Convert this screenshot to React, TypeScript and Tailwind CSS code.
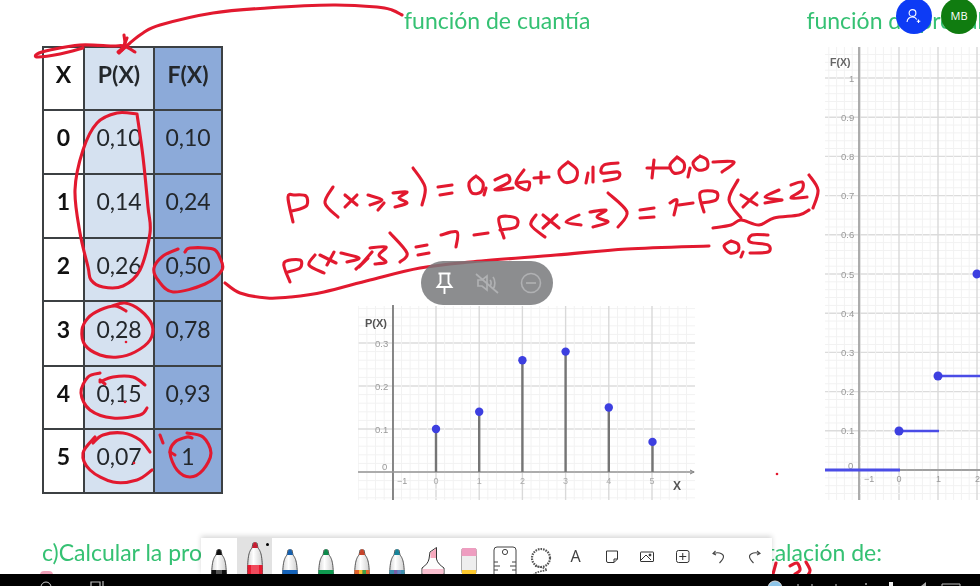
import React from "react";

type Pt = [number, number];

function smooth(p: Pt[]): string {
  if (p.length < 3) return "M" + p.map((q) => q.join(" ")).join("L");
  let d = `M${p[0][0]} ${p[0][1]}`;
  for (let i = 0; i < p.length - 1; i++) {
    const a = p[i - 1] || p[i];
    const b = p[i];
    const c = p[i + 1];
    const e = p[i + 2] || c;
    const c1x = b[0] + (c[0] - a[0]) / 6;
    const c1y = b[1] + (c[1] - a[1]) / 6;
    const c2x = c[0] - (e[0] - b[0]) / 6;
    const c2y = c[1] - (e[1] - b[1]) / 6;
    d += `C${c1x} ${c1y} ${c2x} ${c2y} ${c[0]} ${c[1]}`;
  }
  return d;
}

const strokes: Pt[][] = [
  // arrow
  [[402,15],[392,10],[377,7],[333,5],[267,8],[213,13],[160,25],[143,33],[130,43],[119,53]],
  [[124,35],[125,45],[122,50]],
  [[127,38],[123,47],[118,52]],
  [[135,52],[124,46],[112,46],[80,45],[50,50],[37,54],[38,57],[60,54],[83,48]],
  // big oval
  [[137,114],[117,113],[97,123],[83,150],[75,190],[80,233],[88,267],[91,280],[103,287],[123,286],[140,270],[150,233],[148,207],[143,157],[137,114]],
  // 0,50
  [[185,252],[190,248],[213,249],[220,258],[222,270],[205,284],[173,292],[158,280],[154,268],[163,256],[178,249]],
  // 0,28
  [[112,306],[125,303],[140,310],[152,325],[150,340],[135,352],[118,357],[100,355],[85,345],[82,330],[88,318],[100,310],[115,306],[126,311]],
  // 0,15
  [[100,373],[88,377],[81,393],[90,410],[113,418],[140,415],[147,408]],
  [[100,382],[113,377],[133,377],[145,385]],
  [[100,380],[105,384]],
  // 0,07
  [[93,443],[103,435],[123,433],[140,440],[150,452]],
  [[95,437],[83,453],[90,470],[113,482],[137,480],[152,470]],
  // 1
  [[187,433],[203,437],[211,453],[203,470],[190,477],[177,470],[170,453],[175,442],[187,437],[192,438]],
  [[170,452],[175,455]],
  [[160,435],[163,443]],
  // first line
  [[293,222],[288,197],[295,195],[306,196],[307,205],[300,209],[291,211]],
  [[333,187],[325,203],[338,217]],
  [[345,195],[357,205]],
  [[357,195],[345,207]],
  [[368,195],[382,200],[370,205]],
  [[384,203],[378,210]],
  [[393,193],[407,192],[399,198],[407,203],[395,207]],
  [[413,168],[425,187],[422,205]],
  [[438,187],[452,185]],
  [[440,195],[452,193]],
  [[476,176],[469,183],[472,193],[481,192],[483,183],[476,176]],
  [[486,188],[484,195]],
  [[495,180],[507,175],[509,182],[495,190],[513,188]],
  [[524,170],[516,183],[527,190],[529,182],[518,183]],
  [[534,178],[549,177]],
  [[541,172],[541,183]],
  [[568,162],[559,171],[564,182],[575,180],[577,170],[568,162]],
  [[588,173],[586,183]],
  [[593,167],[593,182]],
  [[618,163],[604,165],[602,173],[618,172],[618,178],[604,181]],
  [[654,160],[652,178]],
  [[647,168],[670,168]],
  [[677,157],[670,165],[674,173],[683,171],[684,163],[677,157]],
  [[690,168],[688,177]],
  [[700,156],[693,163],[698,170],[707,168],[707,160],[700,156]],
  [[713,162],[734,162],[722,172]],
  // second line
  [[290,282],[284,263],[300,260],[300,268],[288,272]],
  [[315,255],[309,265],[324,273]],
  [[320,255],[336,263]],
  [[334,252],[327,265]],
  [[341,253],[359,258],[347,262]],
  [[372,252],[359,267],[368,258],[356,269]],
  [[370,248],[386,247],[379,255],[386,262],[375,264]],
  [[390,233],[407,253],[400,262]],
  [[416,247],[427,245]],
  [[418,255],[429,253]],
  [[441,235],[457,232],[456,247]],
  [[474,235],[488,233]],
  [[504,238],[499,218],[516,218],[516,227],[500,230]],
  [[536,215],[531,225],[545,237]],
  [[543,215],[559,228]],
  [[557,215],[543,228]],
  [[579,215],[566,222],[581,225]],
  [[590,212],[606,210],[597,217],[608,222],[593,227]],
  [[608,193],[627,212],[618,227]],
  [[640,210],[654,208]],
  [[640,218],[654,217]],
  [[670,203],[677,200],[674,215]],
  [[679,205],[693,203]],
  [[704,212],[700,193],[716,192],[716,200],[702,203]],
  [[738,180],[729,200],[741,218]],
  [[741,195],[757,205]],
  [[757,193],[743,207]],
  [[779,190],[765,197],[781,200]],
  [[765,203],[782,200]],
  [[791,185],[802,182],[802,190],[791,198],[807,197]],
  [[809,175],[818,190],[813,208]],
  [[713,228],[731,225],[741,220],[759,225],[774,218],[799,215],[809,210]],
  [[731,241],[724,246],[730,253],[738,251],[738,244],[731,241]],
  [[743,252],[741,257]],
  [[768,235],[752,235],[750,242],[768,245],[768,252],[750,253]],
  // long line
  [[225,283],[240,293],[267,298],[291,297],[324,292],[370,280],[420,268],[470,262],[556,255],[627,249],[709,246]],
  // bottom right
  [[776,563],[773,574]],
  [[790,566],[797,563],[800,570],[795,574]],
  [[806,562],[810,570],[808,575]],
];

const dots: Pt[] = [[126,342],[125,402],[134,463],[777,474]];

function Ink() {
  return (
    <svg className="absolute left-0 top-0 w-[980px] h-[586px] blur-[0.3px]" viewBox="0 0 980 586" fill="none">
      {strokes.map((s, i) => (
        <path key={i} d={smooth(s)} stroke="#e2192f" strokeWidth="3.1" strokeLinecap="round" strokeLinejoin="round" />
      ))}
      {dots.map((d, i) => (
        <circle key={i} cx={d[0]} cy={d[1]} r="1.3" fill="#e2192f" />
      ))}
    </svg>
  );
}

function Grid({ x0, x1, y0, y1, ox, oy, ux, uy }: { x0: number; x1: number; y0: number; y1: number; ox: number; oy: number; ux: number; uy: number }) {
  const v: React.ReactNode[] = [];
  for (let k = -60; k < 60; k++) {
    const major = k % 5 === 0;
    const x = ox + (k * ux) / 5;
    if (x >= x0 && x <= x1) v.push(<line key={"v" + k} x1={x} x2={x} y1={y0} y2={y1} stroke={major ? "#d9d9d9" : "#f2f2f2"} strokeWidth={major ? 1.4 : 1} />);
    const y = oy + (k * uy) / 5;
    if (y >= y0 && y <= y1) v.push(<line key={"h" + k} x1={x0} x2={x1} y1={y} y2={y} stroke={major ? "#dcdcdc" : "#f2f2f2"} strokeWidth={major ? 1.4 : 1} />);
  }
  return <g>{v}</g>;
}

const chartFont = { fontFamily: "'Liberation Sans', sans-serif" };

function ChartP() {
  const ox = 436, oy = 472, ux = 43.2, uy = 43;
  const vals = [0.1, 0.14, 0.26, 0.28, 0.15, 0.07];
  return (
    <svg className="absolute left-[358px] top-[305px] w-[340px] h-[197px] blur-[0.7px]" viewBox="358 305 340 197" style={chartFont}>
      <Grid x0={358} x1={695} y0={306} y1={500} ox={ox} oy={oy} ux={ux} uy={uy} />
      <line x1={393} x2={393} y1={305} y2={500} stroke="#7d7d7d" strokeWidth="1.8" />
      <line x1={358} x2={692} y1={472} y2={472} stroke="#9a9a9a" strokeWidth="1.5" />
      <path d="M690 470l4 2-4 2" fill="none" stroke="#777" strokeWidth="1" />
      {vals.map((v, i) => {
        const x = ox + i * ux + (i === 5 ? 0.5 : 0);
        const y = oy - (v * 10) * uy;
        return (
          <g key={i}>
            <line x1={x} x2={x} y1={y} y2={oy} stroke="#757575" strokeWidth="2.4" />
            <circle cx={x} cy={y} r="4.2" fill="#3d3fe0" />
          </g>
        );
      })}
      <text x="365" y="327" fontSize="11" fontWeight="700" fill="#555">P(X)</text>
      <text x="375" y="346.5" fontSize="9.5" fill="#999">0.3</text>
      <text x="375" y="389.5" fontSize="9.5" fill="#999">0.2</text>
      <text x="375" y="432.5" fontSize="9.5" fill="#999">0.1</text>
      <text x="382" y="470" fontSize="9.5" fill="#999">0</text>
      <text x="397" y="484" fontSize="9" fill="#999">−1</text>
      {[0, 1, 2, 3, 4, 5].map((n) => (
        <text key={n} x={ox + n * ux - 2.5} y="484" fontSize="9" fill="#aaa">{n}</text>
      ))}
      <text x="673" y="490" fontSize="12" fontWeight="700" fill="#555">X</text>
    </svg>
  );
}

function ChartF() {
  const ox = 899, oy = 470, ux = 39, uy = 39.2;
  const labels = [0.1, 0.2, 0.3, 0.4, 0.5, 0.6, 0.7, 0.8, 0.9];
  return (
    <svg className="absolute left-[825px] top-[47px] w-[155px] h-[455px] blur-[0.7px]" viewBox="825 47 155 455" style={chartFont}>
      <Grid x0={825} x1={980} y0={47} y1={500} ox={ox} oy={oy} ux={ux} uy={uy} />
      <line x1={859} x2={859} y1={47} y2={500} stroke="#a5a5a5" strokeWidth="1.8" />
      <line x1={825} x2={980} y1={470} y2={470} stroke="#8a8a8a" strokeWidth="1.5" />
      <text x="830" y="66" fontSize="10.5" fontWeight="700" fill="#666">F(X)</text>
      <text x="849" y="82" fontSize="9.5" fill="#999">1</text>
      {labels.map((v) => (
        <text key={v} x="841" y={oy - v * 10 * uy + 3.5} fontSize="9.5" fill="#999">{v.toFixed(1)}</text>
      ))}
      <text x="848" y="469" fontSize="9.5" fill="#999">0</text>
      <text x="864" y="482" fontSize="9" fill="#999">−1</text>
      <text x="896.5" y="482" fontSize="9" fill="#999">0</text>
      <text x="936" y="482" fontSize="9" fill="#999">1</text>
      <text x="975" y="482" fontSize="9" fill="#999">2</text>
      <line x1={825} x2={900} y1={470} y2={470} stroke="#4a4ce6" strokeWidth="3" />
      <line x1={899} x2={939} y1={431} y2={431} stroke="#4a4ce6" strokeWidth="2.4" />
      <line x1={938} x2={980} y1={376} y2={376} stroke="#4a4ce6" strokeWidth="2.4" />
      <circle cx={899} cy={431} r="4.5" fill="#3d3fe0" />
      <circle cx={938} cy={376} r="4.5" fill="#3d3fe0" />
      <circle cx={977} cy={274} r="4.5" fill="#3d3fe0" />
    </svg>
  );
}

const rows: [string, string, string, string][] = [
  ["X", "P(X)", "F(X)", "h-[63px]"],
  ["0", "0,10", "0,10", "h-[64px]"],
  ["1", "0,14", "0,24", "h-[64px]"],
  ["2", "0,26", "0,50", "h-[63px]"],
  ["3", "0,28", "0,78", "h-[65px]"],
  ["4", "0,15", "0,93", "h-[63px]"],
  ["5", "0,07", "1", "h-[64px]"],
];

function Table() {
  return (
    <div className="w-[181px] border-t-2 border-l-2 border-[#3c4043] text-[23px] leading-none text-[#23272b] blur-[0.5px]">
      {rows.map((r, i) => (
        <div key={i} className={`flex ${r[3]} border-b-2 border-[#3c4043]`}>
          <div className="w-[39px] pb-[9px] flex items-center justify-center font-bold bg-white text-[#111]">{r[0]}</div>
          <div className={`w-[70px] pb-[9px] flex items-center justify-center border-l-2 border-[#3c4043] bg-[#d5e1f0] ${i === 0 ? "font-bold" : ""}`}>{r[1]}</div>
          <div className={`w-[70px] pb-[9px] flex items-center justify-center border-l-2 border-r-2 border-[#3c4043] bg-[#8caad9] ${i === 0 ? "font-bold" : ""}`}>{r[2]}</div>
        </div>
      ))}
    </div>
  );
}

function Pen({ tip, band, raised, top }: { tip: string; band: React.ReactNode; raised?: boolean; top?: string }) {
  const dy = raised ? 0 : 7;
  return (
    <svg className="w-[36px] h-[38px]" viewBox="0 0 36 38" fill="none">
      <defs>
        <linearGradient id="penBody" x1="0" x2="1" y1="0" y2="0">
          <stop offset="0" stopColor="#d4d4d4" />
          <stop offset="0.4" stopColor="#ffffff" />
          <stop offset="1" stopColor="#cfcfcf" />
        </linearGradient>
      </defs>
      <path d={`M15 ${dy + 10}L16 ${dy + 5}L20 ${dy + 5}L21 ${dy + 10}C24.5 ${dy + 14} 25.5 ${dy + 20} 25.5 ${dy + 38}L10.5 ${dy + 38}C10.5 ${dy + 20} 11.5 ${dy + 14} 15 ${dy + 10}Z`} fill="url(#penBody)" stroke="#444" strokeWidth="0.9" />
      <path d={`M15 ${dy + 10}L16.5 ${dy + 5}L18 ${dy + 4}L19.5 ${dy + 5}L21 ${dy + 10}Z`} fill={tip} />
      <rect x="10.5" y={raised ? 27 : 32} width="15" height="11" fill={top || "#000"} />
      {band}
    </svg>
  );
}

function Tools() {
  const pens = [
    { tip: "#111", top: "#111", band: <rect x="15" y="32" width="6" height="6" fill="#555" /> },
    { tip: "#c81e32", top: "#e8192f", raised: true, band: <rect x="14" y="27" width="8" height="11" fill="#f04a5c" /> },
    { tip: "#1560ae", top: "#1462b8", band: null },
    { tip: "#0d8a4b", top: "#0f9a50", band: null },
    { tip: "#c7442b", top: "#e0622a", band: <><rect x="15" y="32" width="3.5" height="6" fill="#f6c12d" /><rect x="18.5" y="32" width="3.5" height="6" fill="#3ca04a" /></> },
    { tip: "#17849a", top: "#3d8fae", band: <><rect x="15" y="32" width="3.5" height="6" fill="#7a5fa8" /><rect x="18.5" y="32" width="3.5" height="6" fill="#5f86c0" /></> },
  ];
  return (
    <div className="absolute left-[201px] top-[538px] w-[571px] h-[36px] flex bg-white shadow-[0_-2px_5px_rgba(0,0,0,0.16)] overflow-hidden blur-[0.4px]">
      {pens.map((p, i) => (
        <div key={i} className={`relative w-[35.7px] h-[36px] shrink-0 ${p.raised ? "bg-[#e2e2e2]" : ""}`}>
          <Pen {...p} />
          {p.raised && <span className="absolute left-[29px] top-[5px] w-[3px] h-[3px] rounded-full bg-black" />}
        </div>
      ))}
      <div className="w-[35.7px] shrink-0">
        <svg className="w-[36px] h-[36px]" viewBox="0 0 36 36" fill="none">
          <path d="M7 36V30C11 27 13 25 14 21L15 14L21.5 9.5V21C22.5 25 25 27 29 30V36Z" fill="#fdfdfd" stroke="#333" strokeWidth="1" />
          <path d="M15.5 20L15.5 14.5L21 10.5V20Z" fill="#f6a9bd" />
          <rect x="7.5" y="31" width="21" height="5" fill="#f9bfd0" />
        </svg>
      </div>
      <div className="w-[35.7px] shrink-0">
        <svg className="w-[36px] h-[36px]" viewBox="0 0 36 36" fill="none">
          <rect x="10.5" y="10.5" width="15" height="25" rx="2" fill="#eeeeee" stroke="#aaa" />
          <path d="M10.5 18V12a2 2 0 012-2h11a2 2 0 012 2v6Z" fill="#ee9dc0" />
          <rect x="11" y="32" width="14" height="4" fill="#fbc82f" />
        </svg>
      </div>
      <div className="w-[35.7px] shrink-0">
        <svg className="w-[36px] h-[36px]" viewBox="0 0 36 36" fill="none" stroke="#444" strokeWidth="1">
          <path d="M7 36V12a3 3 0 013-3h16a3 3 0 013 3v24" fill="#fff" />
          <circle cx="18" cy="14" r="2.6" />
          <path d="M7 24h4M7 28h6M7 32h4M29 24h-4M29 28h-6M29 32h-4" />
        </svg>
      </div>
      <div className="w-[35.7px] shrink-0">
        <svg className="w-[36px] h-[36px]" viewBox="0 0 36 36" fill="none">
          <circle cx="19" cy="20" r="9" stroke="#555" strokeWidth="2.2" strokeDasharray="1.6 1" />
          <path d="M13 28C16 29 22 29 25 32C22 33 16 33 12 36" stroke="#555" strokeWidth="1.6" strokeDasharray="1.6 1" />
        </svg>
      </div>
      <div className="w-[35.7px] shrink-0 flex items-center justify-center pb-[1px] text-[16px] text-[#444] [font-family:'Noto_Sans',sans-serif]">A</div>
      <div className="w-[35.7px] shrink-0">
        <svg className="w-[36px] h-[36px]" viewBox="0 0 36 36" fill="none" stroke="#333" strokeWidth="1">
          <path d="M12.5 13H23.5V21L20 24.5H14A1.5 1.5 0 0112.5 23Z" />
          <path d="M20 24.5V21H23.5" />
        </svg>
      </div>
      <div className="w-[35.7px] shrink-0">
        <svg className="w-[36px] h-[36px]" viewBox="0 0 36 36" fill="none" stroke="#333" strokeWidth="1">
          <rect x="11.5" y="14" width="13" height="9.5" rx="0.5" />
          <path d="M12 22L17 17L22 22" />
          <circle cx="21" cy="17" r="1" fill="#333" />
        </svg>
      </div>
      <div className="w-[35.7px] shrink-0">
        <svg className="w-[36px] h-[36px]" viewBox="0 0 36 36" fill="none" stroke="#333" strokeWidth="1">
          <rect x="11.5" y="12.5" width="12.5" height="12" rx="2" />
          <path d="M17.75 15v7M14.25 18.5h7" />
        </svg>
      </div>
      <div className="w-[35.7px] shrink-0">
        <svg className="w-[36px] h-[36px]" viewBox="0 0 36 36" fill="none" stroke="#444" strokeWidth="1.1">
          <path d="M14.5 13L12 15.5L15 17" />
          <path d="M12.5 15.5C19 13.5 24 16.5 22 20.5C21 22.5 19.5 24 18.5 25" />
        </svg>
      </div>
      <div className="w-[35.7px] shrink-0">
        <svg className="w-[36px] h-[36px]" viewBox="0 0 36 36" fill="none" stroke="#444" strokeWidth="1.1">
          <path d="M21 13L24 15.5L21 17" />
          <path d="M23.5 15.5C17 13.5 12 16.5 14 20.5C15 22.5 16.5 24 17.5 25" />
        </svg>
      </div>
    </div>
  );
}

function Pill() {
  return (
    <div className="absolute left-[421px] top-[261px] w-[132px] h-[44px] rounded-[22px] bg-[#78797b]/85 flex items-center justify-between pl-[13px] pr-[11px] blur-[0.3px]">
      <svg className="w-[20px] h-[24px]" viewBox="0 0 20 24" fill="none" stroke="#fff" strokeWidth="1.9">
        <path d="M4.5 2.5H16.5M6.5 2.5V12L3.5 16H17.5L14.5 12V2.5M10.5 16V23" />
      </svg>
      <svg className="w-[24px] h-[24px]" viewBox="0 0 24 24" fill="none" stroke="#b0b1b3" strokeWidth="1.7">
        <path d="M3 9H7L12 5V19L7 15H3Z" />
        <path d="M15 9C16.5 10.5 16.5 13.5 15 15M18 6C20.5 9 20.5 15 18 18" />
        <path d="M1 3L23 22" />
      </svg>
      <svg className="w-[22px] h-[22px]" viewBox="0 0 22 22" fill="none" stroke="#b0b1b3" strokeWidth="1.6">
        <circle cx="11" cy="11" r="9.5" />
        <path d="M6 11H16" />
      </svg>
    </div>
  );
}

export default function App() {
  const green = "text-[#35c173] [font-family:Lato,sans-serif]";
  return (
    <div className="relative w-[980px] h-[586px] overflow-hidden bg-white flex flex-col [font-family:Lato,sans-serif]">
      <main className="relative h-[574px] overflow-hidden">
        <div className={`h-[46px] flex items-start pt-[6px] pl-[404px] gap-[216px] text-[23px] leading-[28px] whitespace-nowrap blur-[0.4px] ${green}`}>
          <span>función de cuantía</span>
          <span>función de probabilidad</span>
        </div>
        <div className="pl-[42px]">
          <Table />
        </div>
        <div className={`mt-[43px] ml-[42px] w-[840px] flex justify-between text-[23px] leading-[30px] whitespace-nowrap blur-[0.4px] ${green}`}>
          <span>c)Calcular la probabilidad</span>
          <span>de una instalación de:</span>
        </div>
        <span className="absolute left-[40px] top-[571px] w-[13px] h-[8px] rounded-full bg-[#f0a0b8]" />
        <ChartP />
        <ChartF />
        <Ink />
        <Pill />
        <Tools />
        <div className="absolute left-[896px] top-[-2px] w-[36px] h-[36px] rounded-full bg-[#0d3bf5] flex items-center justify-center">
          <svg className="w-[16px] h-[16px]" viewBox="0 0 16 16" fill="none" stroke="#fff" strokeWidth="1.1">
            <circle cx="6.5" cy="5" r="3.4" />
            <path d="M1 14C1.5 10.5 4 9 6.5 9C8.5 9 10 10 10.8 11.5" />
            <path d="M12.5 11.5V15M10.8 13.3H14.3" />
          </svg>
        </div>
        <div className="absolute left-[941px] top-[-2px] w-[36px] h-[36px] rounded-full bg-[#107c10] flex items-center justify-center text-[11px] text-white [font-family:'Open_Sans',sans-serif]">MB</div>
      </main>
      <footer className="h-[12px] bg-black overflow-hidden">
        <svg className="w-[980px] h-[12px]" viewBox="0 574 980 12" fill="none">
          <circle cx="46" cy="587" r="5" stroke="#ccc" strokeWidth="1" />
          <path d="M91 586V582H100V586M103 581V586" stroke="#bbb" strokeWidth="1.2" />
          <circle cx="775" cy="588" r="7" fill="#8cc4e8" stroke="#ddd" />
          <circle cx="798" cy="585" r="1" fill="#888" />
          <circle cx="812" cy="585" r="1" fill="#888" />
          <circle cx="836" cy="585" r="1" fill="#888" />
          <circle cx="866" cy="584" r="1" fill="#aaa" />
          <rect x="889" y="582" width="4" height="4" fill="#eee" />
          <path d="M921 586L926 582V586Z" fill="#aaa" />
          <path d="M942 586V584H960V586" stroke="#bbb" />
        </svg>
      </footer>
    </div>
  );
}
